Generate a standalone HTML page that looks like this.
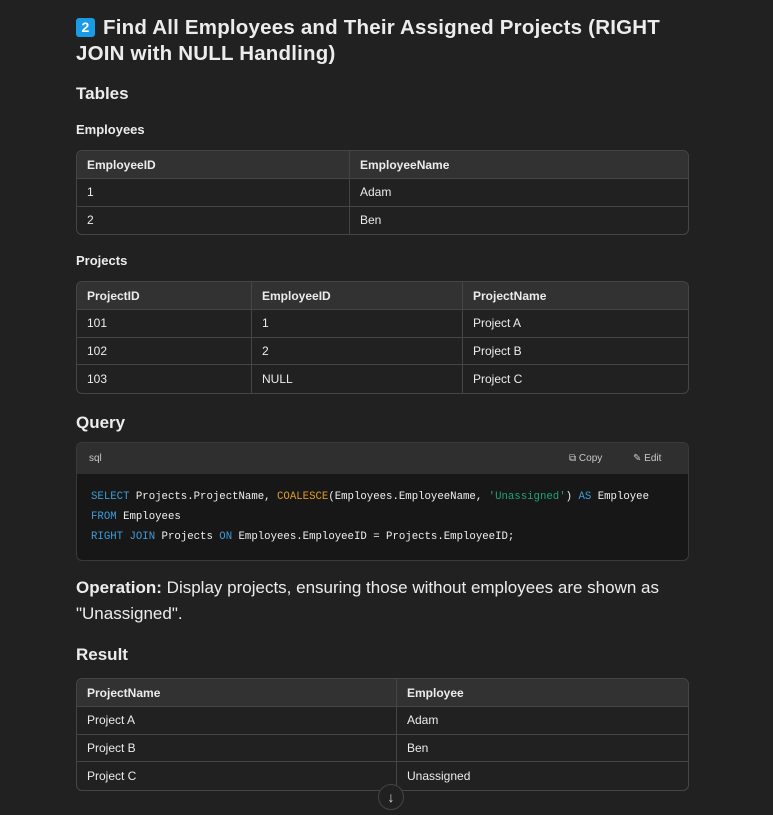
<!DOCTYPE html>
<html><head><meta charset="utf-8"><style>
*{box-sizing:border-box;margin:0;padding:0}
body{width:773px;height:815px;background:#212121;color:#ececec;font-family:"Liberation Sans",sans-serif;position:relative;overflow:hidden}
.a{position:absolute;white-space:nowrap}
h1{font-size:20.5px;font-weight:bold;line-height:26px;letter-spacing:0.2px}
.badge{display:inline-block;width:19px;height:19px;background:#1a9be6;border-radius:3px;color:#fff;font-size:14px;text-align:center;line-height:19px;vertical-align:2px;margin-right:8px}
.h2{font-size:17px;font-weight:bold}
.h3{font-size:13px;font-weight:bold}
table{position:absolute;left:76px;width:613px;border-collapse:separate;border-spacing:0;border:1px solid #454545;border-radius:6px;overflow:hidden;font-size:12px}
td,th{text-align:left;padding:0 10px;border-bottom:1px solid #454545;border-right:1px solid #454545;height:27.5px;font-weight:normal;color:#ececec}
th{background:#323232;font-weight:bold;height:28px}
tr td:last-child,tr th:last-child{border-right:none}
tr:last-child td{border-bottom:none}
.code{position:absolute;left:76px;top:442px;width:613px;height:119px;border:1px solid #3a3a3a;border-radius:6px;overflow:hidden;background:#171717}
.ch{height:31px;background:#2f2f2f;font-size:10px;color:#c8c8c8;padding:0 12px;line-height:31px;position:relative}
pre{font-family:"Liberation Mono",monospace;font-size:10.7px;line-height:20px;color:#f0f0f0;padding:13px 14px}
.k{color:#3f9ad6}.f{color:#e09a2a}.s{color:#1fa37a}
</style></head><body>
<h1 class="a" style="left:76px;top:15px"><span class="badge">2</span>Find All Employees and Their Assigned Projects (RIGHT<br>JOIN with NULL Handling)</h1>
<div class="a h2" style="left:76px;top:84px">Tables</div>
<div class="a h3" style="left:76px;top:122px">Employees</div>
<table style="top:150px"><tr><th style="width:273px">EmployeeID</th><th>EmployeeName</th></tr>
<tr><td>1</td><td>Adam</td></tr><tr><td>2</td><td>Ben</td></tr></table>
<div class="a h3" style="left:76px;top:253px">Projects</div>
<table style="top:281px"><tr><th style="width:175px">ProjectID</th><th style="width:211px">EmployeeID</th><th>ProjectName</th></tr>
<tr><td>101</td><td>1</td><td>Project A</td></tr>
<tr><td>102</td><td>2</td><td>Project B</td></tr>
<tr><td>103</td><td>NULL</td><td>Project C</td></tr></table>
<div class="a h2" style="left:76px;top:413px">Query</div>
<div class="code"><div class="ch">sql<span style="position:absolute;left:492px">⧉ Copy</span><span style="position:absolute;left:556px">✎ Edit</span></div>
<pre><span class="k">SELECT</span> Projects.ProjectName, <span class="f">COALESCE</span>(Employees.EmployeeName, <span class="s">'Unassigned'</span>) <span class="k">AS</span> Employee
<span class="k">FROM</span> Employees
<span class="k">RIGHT JOIN</span> Projects <span class="k">ON</span> Employees.EmployeeID = Projects.EmployeeID;</pre></div>
<div class="a" style="left:76px;top:575px;font-size:17px;line-height:26px"><b>Operation:</b> Display projects, ensuring those without employees are shown as<br>"Unassigned".</div>
<div class="a h2" style="left:76px;top:645px">Result</div>
<table style="top:678px"><tr><th style="width:320px">ProjectName</th><th>Employee</th></tr>
<tr><td>Project A</td><td>Adam</td></tr><tr><td>Project B</td><td>Ben</td></tr><tr><td>Project C</td><td>Unassigned</td></tr></table>
<div class="a" style="left:378px;top:784px;width:26px;height:26px;border-radius:50%;border:1px solid #444;background:#212121;text-align:center;line-height:24px;font-size:14px;color:#ddd">↓</div>
</body></html>
